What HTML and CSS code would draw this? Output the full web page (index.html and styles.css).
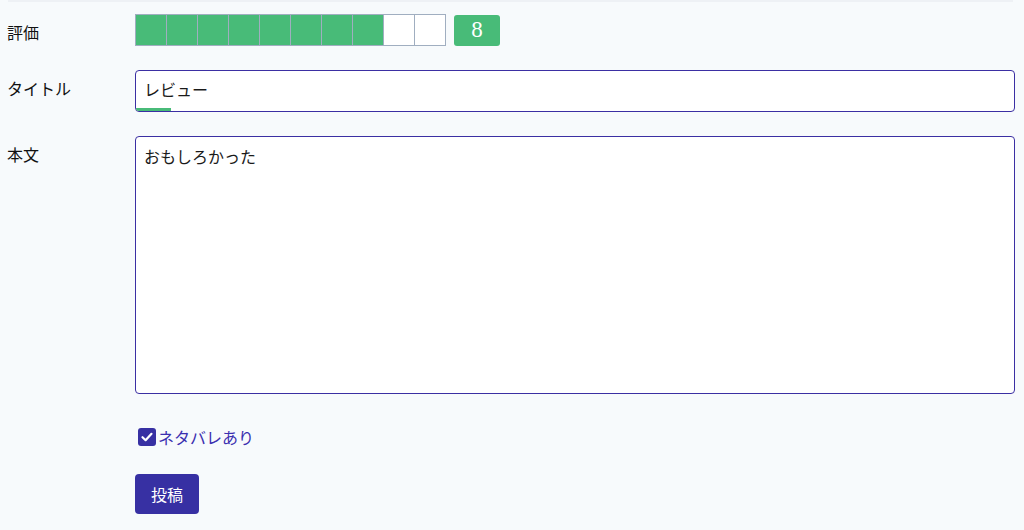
FILE: index.html
```html
<!DOCTYPE html>
<html lang="ja">
<head>
<meta charset="utf-8">
<title>レビュー投稿</title>
<link rel="stylesheet" href="styles.css">
</head>
<body>
<div class="page">
  <div class="topline"></div>
  <form class="form">
    <div class="row row-rating">
      <div class="label">評価</div>
      <div class="field rating-field">
        <div class="rating">
          <span class="cell on"></span><span class="cell on"></span><span class="cell on"></span><span class="cell on"></span><span class="cell on"></span><span class="cell on"></span><span class="cell on"></span><span class="cell on"></span><span class="cell"></span><span class="cell"></span>
        </div>
        <div class="badge">8</div>
      </div>
    </div>
    <div class="row row-title">
      <div class="label">タイトル</div>
      <div class="field">
        <div class="input">
          <span class="input-text">レビュー</span>
          <span class="progress" style="width:4%"></span>
        </div>
      </div>
    </div>
    <div class="row row-body">
      <div class="label">本文</div>
      <div class="field">
        <div class="textarea">おもしろかった</div>
      </div>
    </div>
    <div class="row row-check">
      <div class="label"></div>
      <div class="field">
        <label class="check">
          <span class="box"><svg width="14" height="14" viewBox="0 0 14 14"><path d="M2.5 7.2 L5.6 10.2 L11.5 3.8" fill="none" stroke="#fff" stroke-width="2.2" stroke-linecap="round" stroke-linejoin="round"/></svg></span>
          <span class="check-text">ネタバレあり</span>
        </label>
      </div>
    </div>
    <div class="row row-submit">
      <div class="label"></div>
      <div class="field">
        <button type="button" class="btn">投稿</button>
      </div>
    </div>
  </form>
</div>
</body>
</html>
```
FILE: styles.css
```css
html, body {
  margin: 0;
  padding: 0;
  background: #f7fafc;
  font-family: "Noto Sans CJK JP", "Noto Sans", sans-serif;
  font-size: 16px;
  color: #1a1a1a;
}
.page {
  padding: 0 9px 0 7px;
}
.topline {
  height: 2px;
  margin: 0 2px 0 1px;
  background: #eef1f5;
}
.form {
  margin: 0;
  padding-top: 12px;
}
.row {
  display: flex;
}
.label {
  width: 128px;
  flex: none;
  padding-top: 6px;
  line-height: 24px;
  color: #111;
}
.field {
  flex: 1;
  min-width: 0;
}
.rating-field {
  display: flex;
  align-items: flex-start;
}
.rating {
  display: flex;
  border: 1px solid #a0aec0;
  border-right: none;
}
.cell {
  width: 30px;
  height: 30px;
  border-right: 1px solid #a0aec0;
  background: #fff;
}
.cell.on {
  background: #48bb78;
}
.badge {
  margin-left: 8px;
  margin-top: 1px;
  width: 46px;
  height: 31px;
  border-radius: 3px;
  background: #48bb78;
  color: #fff;
  font-family: "Liberation Serif", "DejaVu Serif", serif;
  font-size: 23px;
  line-height: 30px;
  text-align: center;
}
.row-title {
  margin-top: 24px;
}
.input {
  position: relative;
  height: 40px;
  border: 1px solid #3b2fa3;
  border-radius: 4px;
  background: #fff;
  padding: 0 8px;
  line-height: 37px;
  overflow: hidden;
}
.progress {
  position: absolute;
  left: 0;
  bottom: 0;
  height: 3px;
  background: #48bb78;
}
.row-body {
  margin-top: 24px;
}
.textarea {
  height: 242px;
  border: 1px solid #3b2fa3;
  border-radius: 4px;
  background: #fff;
  padding: 6px 8px 8px;
  line-height: 26px;
}
.row-check {
  margin-top: 31px;
}
.check {
  display: flex;
  align-items: center;
  height: 24px;
  padding-left: 3px;
}
.box {
  width: 18px;
  height: 18px;
  border-radius: 3px;
  background: #3730a3;
  display: flex;
  align-items: center;
  justify-content: center;
}
.check-text {
  margin-left: 2px;
  color: #3b30b0;
  line-height: 22px;
}
.row-submit {
  margin-top: 25px;
}
.btn {
  height: 40px;
  padding: 0 16px;
  border: none;
  border-radius: 4px;
  background: #3730a3;
  color: #fff;
  font-family: "Noto Sans CJK JP", "Noto Sans", sans-serif;
  font-size: 16px;
  line-height: 38px;
}
```
